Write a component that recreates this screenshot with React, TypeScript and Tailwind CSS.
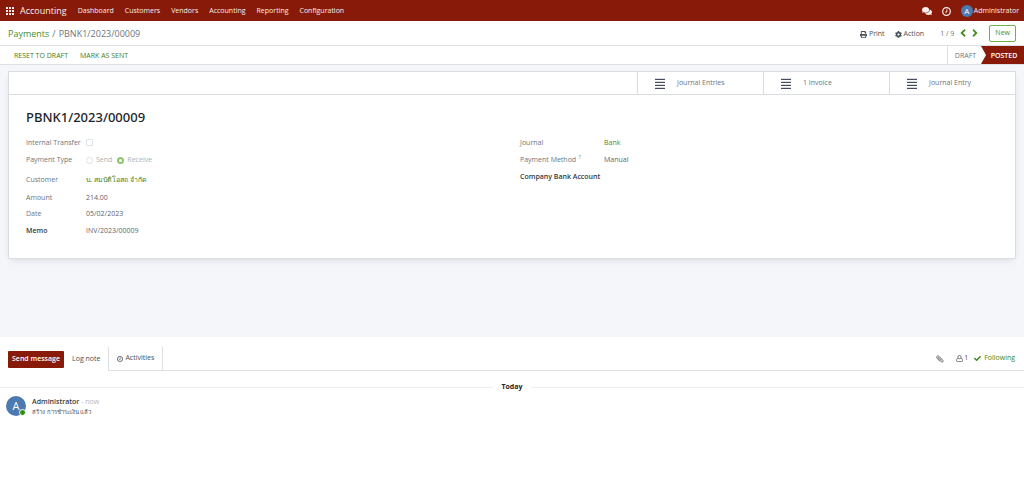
import type { ReactNode } from 'react';
import { FaCheck, FaChevronLeft, FaChevronRight, FaCog, FaComments, FaPrint } from 'react-icons/fa';

const MENU = ['Dashboard', 'Customers', 'Vendors', 'Accounting', 'Reporting', 'Configuration'];
const STATS = ['Journal Entries', '1 Invoice', 'Journal Entry'];

function AppsIcon() {
  return (
    <svg viewBox="0 0 8 8" className="size-2" fill="currentColor" aria-hidden="true">
      {[0, 3, 6].map((y) => [0, 3, 6].map((x) => <rect key={`${x}-${y}`} x={x} y={y} width="2" height="2" />))}
    </svg>
  );
}

function ClockIcon({ className }: { className: string }) {
  return (
    <svg viewBox="0 0 16 16" className={className} fill="none" stroke="currentColor" aria-hidden="true">
      <circle cx="8" cy="8" r="6.8" strokeWidth="2.2" />
      <path d="M8.6 4v5H5.4" strokeWidth="1.6" />
    </svg>
  );
}

function BarsIcon() {
  return (
    <svg viewBox="0 0 10 11" className="h-[11px] w-[10px]" fill="#454b5e" aria-hidden="true">
      {[1, 4, 7, 10].map((y) => (
        <rect key={y} y={y - 0.2} width="10" height="1.2" />
      ))}
    </svg>
  );
}

function ClipIcon() {
  return (
    <svg
      viewBox="0 0 16 16"
      className="size-2"
      fill="none"
      stroke="currentColor"
      strokeWidth="1.5"
      strokeLinecap="round"
      aria-hidden="true"
    >
      <path d="M11 10.5 5.8 5.2c-1.4-1.3-3 .3-1.7 1.7l6.4 6.5c2.6 2.4 5.4-.5 3-3L6.7 3C3-.4-.9 3.6 2.3 7l5.4 5.4" />
    </svg>
  );
}

function UserIcon() {
  return (
    <svg
      viewBox="0 0 14 14"
      className="size-[7px]"
      fill="none"
      stroke="currentColor"
      strokeWidth="1.5"
      aria-hidden="true"
    >
      <circle cx="7" cy="4.3" r="3.3" />
      <path d="M3.8 6.5C1.5 7 1 9.5 1 11.2c0 1.2.7 2 1.8 2h8.4c1.1 0 1.8-.8 1.8-2 0-1.700-.5-4.200-2.800-4.700" />
    </svg>
  );
}

function Navbar() {
  return (
    <nav className="flex h-[21px] items-center bg-[#871a08] px-[5px] pt-px text-[7px] text-[#f8efed]">
      <button type="button" aria-label="Apps" className="mr-[6px] ml-px">
        <AppsIcon />
      </button>
      <a href="#accounting" className="mr-[11px] text-[9px]">
        Accounting
      </a>
      <div className="flex gap-[11px]">
        {MENU.map((item) => (
          <a key={item} href={`#${item.toLowerCase()}`}>
            {item}
          </a>
        ))}
      </div>
      <div className="ml-auto flex items-center">
        <button type="button" aria-label="Messages" className="mr-[10px]">
          <FaComments className="size-[10px]" />
        </button>
        <button type="button" aria-label="Activities" className="mr-[10px]">
          <ClockIcon className="size-[9px]" />
        </button>
        <button type="button" className="flex items-center gap-px">
          <span className="flex size-3 items-center justify-center rounded-full bg-[#4c79b0] text-[8px] text-white">
            A
          </span>
          Administrator
        </button>
      </div>
    </nav>
  );
}

function ControlPanel() {
  return (
    <div className="flex h-[25px] items-center border-b border-[#dee0e4] bg-white px-2 text-[7px] text-[#495057]">
      <div className="flex gap-[3px] pt-px text-[9px] text-[#6c757d]">
        <a href="#payments" className="text-[#4b8b2b]">
          Payments
        </a>
        <span>/</span>
        <span>PBNK1/2023/00009</span>
      </div>
      <div className="ml-auto flex items-center">
        <div className="flex items-center pt-[2px]">
          <button type="button" className="mr-[10px] flex items-center gap-[2px]">
            <FaPrint className="size-[7px]" />
            Print
          </button>
          <button type="button" className="mr-4 flex items-center gap-[2px]">
            <FaCog className="size-[7px]" />
            Action
          </button>
          <span className="mr-[5px] text-[#6c757d]">1 / 9</span>
        </div>
        <button type="button" aria-label="Previous" className="mr-[4px] text-[#2f8000]">
          <FaChevronLeft className="size-2 stroke-current stroke-[40]" />
        </button>
        <button type="button" aria-label="Next" className="mr-[10px] text-[#2f8000]">
          <FaChevronRight className="size-2 stroke-current stroke-[40]" />
        </button>
        <button type="button" className="h-[17px] rounded-[2px] border border-[#6fb04a] px-[5px] text-[#4b8b2b]">
          New
        </button>
      </div>
    </div>
  );
}

function StatusBar() {
  return (
    <div className="flex h-[19px] items-stretch border-b border-[#dee0e4] bg-white pl-[14px] text-[7px]">
      <div className="flex items-center gap-3 pt-[2px] font-medium text-[#3f7d20]">
        <button type="button">RESET TO DRAFT</button>
        <button type="button">MARK AS SENT</button>
      </div>
      <div className="ml-auto flex">
        <button type="button" className="w-[34px] border-l border-[#dee0e4] pt-[2px] pl-[2px] text-[#6c757d]">
          DRAFT
        </button>
        <button
          type="button"
          className="w-[43px] bg-[#871a08] pt-[2px] pl-[3px] font-semibold text-white [clip-path:polygon(0_0,100%_0,100%_100%,0_100%,5px_50%)]"
        >
          POSTED
        </button>
      </div>
    </div>
  );
}

function Field({
  label,
  strong,
  help,
  children,
  htmlFor,
}: {
  label: string;
  strong?: boolean;
  help?: boolean;
  children?: ReactNode;
  htmlFor?: string;
}) {
  return (
    <>
      <label
        htmlFor={htmlFor}
        className={strong ? 'whitespace-nowrap font-semibold text-[#343a40]' : 'whitespace-nowrap text-[#6c757d]'}
      >
        {label}
        {help && <sup className="ml-[2px] text-[6px] text-[#3c9dc4]">?</sup>}
      </label>
      <div className="flex items-center text-[#5b6470]">{children}</div>
    </>
  );
}

function Sheet() {
  return (
    <main className="bg-[#f5f6fa] px-2 pt-[6px] pb-[78px]">
      <div className="border border-[#d9dce1] bg-white pb-[19px] shadow-[0_3px_8px_-3px_rgba(0,0,0,0.15)]">
        <div className="flex h-[23px] justify-end border-b border-[#d9dce1]">
          {STATS.map((label) => (
            <button
              key={label}
              type="button"
              className="flex w-[126px] items-center gap-3 border-l border-[#d9dce1] pt-px pl-[17px] text-[7px] text-[#6c757d]"
            >
              <BarsIcon />
              {label}
            </button>
          ))}
        </div>
        <h1 className="px-[17px] pt-3 font-['Noto_Sans',sans-serif] text-[13px] leading-5 font-medium text-[#212529]">
          PBNK1/2023/00009
        </h1>
        <div className="grid grid-cols-2 px-[17px] pt-[7px] text-[7px] leading-[10px]">
          <div className="grid grid-cols-[60px_1fr] grid-rows-[17px_18px_21px_15px_17px_17px] items-center">
            <Field label="Internal Transfer" htmlFor="internal">
              <input
                id="internal"
                type="checkbox"
                disabled
                className="size-[7px] appearance-none rounded-[1px] border border-[#dee2e6]"
              />
            </Field>
            <Field label="Payment Type">
              <label className="mr-[5px] flex items-center gap-[3px] text-[#adb2b8]">
                <input
                  type="radio"
                  name="type"
                  disabled
                  className="size-[7px] appearance-none rounded-full border border-[#dee2e6]"
                />
                Send
              </label>
              <label className="flex items-center gap-[3px] text-[#adb2b8]">
                <input
                  type="radio"
                  name="type"
                  defaultChecked
                  disabled
                  className="size-[7px] appearance-none rounded-full border-2 border-[#8cc56c]"
                />
                Receive
              </label>
            </Field>
            <Field label="Customer">
              <a href="#customer" className="font-['Noto_Sans',sans-serif] font-medium text-[#3f7d20]">
                บ. สมบัติโอสถ จำกัด
              </a>
            </Field>
            <Field label="Amount">214.00</Field>
            <Field label="Date">05/02/2023</Field>
            <Field label="Memo" strong>
              INV/2023/00009
            </Field>
          </div>
          <div className="grid grid-cols-[84px_1fr] grid-rows-[17px_17px_17px] content-start items-center pl-2">
            <Field label="Journal">
              <a href="#bank" className="text-[#4b8b2b]">
                Bank
              </a>
            </Field>
            <Field label="Payment Method" help>
              Manual
            </Field>
            <Field label="Company Bank Account" strong />
          </div>
        </div>
      </div>
    </main>
  );
}

function Chatter() {
  return (
    <section className="bg-white text-[7px] text-[#495057]">
      <div className="flex pt-[10px]">
        <div className="flex h-[24px] items-center pl-2">
          <button type="button" className="h-[17px] rounded-[1px] bg-[#871a08] px-1 font-semibold text-white">
            Send message
          </button>
          <button type="button" className="px-2">
            Log note
          </button>
        </div>
        <div className="flex flex-1 border-b border-l border-[#dee0e4]">
          <button type="button" className="flex items-center gap-[2px] border-r border-[#dee0e4] px-2">
            <ClockIcon className="size-[6px]" />
            Activities
          </button>
          <div className="ml-auto flex items-center pr-[9px]">
            <button type="button" aria-label="Attach files" className="mr-3">
              <ClipIcon />
            </button>
            <button type="button" className="mr-[6px] flex items-center gap-px">
              <UserIcon />1
            </button>
            <button type="button" className="flex items-center gap-[3px] font-medium text-[#3f8a1c]">
              <FaCheck className="size-[7px]" />
              Following
            </button>
          </div>
        </div>
      </div>
      <div className="mt-[11px] flex items-center gap-2 leading-[10px] font-bold text-[#212529]">
        <hr className="flex-1 border-[#eceef0]" />
        Today
        <hr className="flex-1 border-[#eceef0]" />
      </div>
      <div className="flex gap-[6px] px-[6px] pt-1">
        <div className="relative flex size-5 items-center justify-center rounded-full bg-[#4c79b0] text-[11px] text-white">
          A
          <span className="absolute right-0 bottom-0 size-[7px] rounded-full border border-white bg-[#2f8f0f]" />
        </div>
        <div className="pt-px leading-[10px]">
          <div>
            <span className="font-semibold text-[#343a40]">Administrator</span>
            <span className="text-[#b4b9be]"> - now</span>
          </div>
          <p className="font-['Noto_Sans',sans-serif] text-[6px]">สร้าง การชำระเงิน แล้ว</p>
        </div>
      </div>
    </section>
  );
}

export default function App() {
  return (
    <div className="min-h-screen bg-white font-['Open_Sans','Noto_Sans',sans-serif]">
      <Navbar />
      <ControlPanel />
      <StatusBar />
      <Sheet />
      <Chatter />
    </div>
  );
}
